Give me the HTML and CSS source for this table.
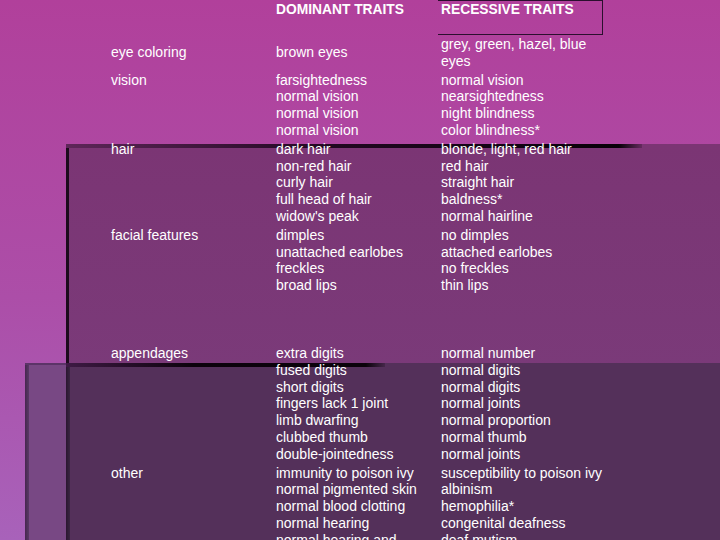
FILE: index.html
```html
<!DOCTYPE html>
<html>
<head>
<meta charset="utf-8">
<link rel="stylesheet" href="styles.css">
</head>
<body>
<div class="slide">
  <table class="traits">
    <colgroup><col class="col"><col class="col"><col class="col"></colgroup>
    <tr class="head">
      <td></td>
      <td>DOMINANT TRAITS</td>
      <td class="box">RECESSIVE TRAITS</td>
    </tr>
    <tr>
      <td class="mid">eye coloring</td>
      <td class="mid">brown eyes</td>
      <td>grey, green, hazel, blue<br>eyes</td>
    </tr>
    <tr>
      <td>vision</td>
      <td>farsightedness<br>normal vision<br>normal vision<br>normal vision</td>
      <td>normal vision<br>nearsightedness<br>night blindness<br>color blindness*</td>
    </tr>
    <tr>
      <td>hair</td>
      <td>dark hair<br>non-red hair<br>curly hair<br>full head of hair<br>widow's peak</td>
      <td>blonde, light, red hair<br>red hair<br>straight hair<br>baldness*<br>normal hairline</td>
    </tr>
    <tr class="tall">
      <td>facial features</td>
      <td>dimples<br>unattached earlobes<br>freckles<br>broad lips</td>
      <td>no dimples<br>attached earlobes<br>no freckles<br>thin lips</td>
    </tr>
    <tr>
      <td>appendages</td>
      <td>extra digits<br>fused digits<br>short digits<br>fingers lack 1 joint<br>limb dwarfing<br>clubbed thumb<br>double-jointedness</td>
      <td>normal number<br>normal digits<br>normal digits<br>normal joints<br>normal proportion<br>normal thumb<br>normal joints</td>
    </tr>
    <tr>
      <td>other</td>
      <td>immunity to poison ivy<br>normal pigmented skin<br>normal blood clotting<br>normal hearing<br>normal hearing and<br>speaking</td>
      <td>susceptibility to poison ivy<br>albinism<br>hemophilia*<br>congenital deafness<br>deaf mutism</td>
    </tr>
  </table>
</div>
</body>
</html>
```

FILE: styles.css
```css
html, body {
  margin: 0;
  padding: 0;
}

.slide {
  width: 720px;
  height: 540px;
  overflow: hidden;
  box-sizing: border-box;
  padding-left: 108px;
  background-repeat: no-repeat;
  background-image:
    linear-gradient(to right, #3e1a44, #0c020c 40%, #0a020a 94%, rgba(10, 2, 10, 0.2)),
    linear-gradient(#5c3468, #5c3468),
    linear-gradient(to right, #5e2659, #220822 45%, #080008 96%, rgba(8, 0, 8, 0.2)),
    linear-gradient(#1c0b1c, #1c0b1c),
    linear-gradient(to right, #2a1630, #3a2642),
    linear-gradient(to right, #46264f, #5a3a66),
    linear-gradient(#54305a, #54305a),
    linear-gradient(#784884, #784884),
    linear-gradient(#7b3574, #7a3e7d),
    linear-gradient(#b1409b, #ac4ea8 55%, #a862ba);
  background-position:
    66px 363px,
    25px 363px,
    66px 144px,
    66px 144px,
    66px 363px,
    25px 363px,
    66px 363px,
    25px 363px,
    66px 144px,
    0 0;
  background-size:
    319px 4px,
    41px 2px,
    576px 4px,
    3px 219px,
    4px 177px,
    4px 177px,
    654px 177px,
    41px 177px,
    654px 396px,
    720px 540px;
}

.traits {
  border-collapse: separate;
  border-spacing: 0;
  table-layout: fixed;
  width: 495px;
  font-family: "Liberation Sans", Arial, sans-serif;
  font-size: 14px;
  line-height: 16.8px;
  color: #ffffff;
}

.col {
  width: 165px;
}

.traits td {
  padding: 1px 0 1px 3px;
  vertical-align: top;
  white-space: nowrap;
  box-sizing: border-box;
}

.traits td.mid {
  vertical-align: middle;
}

.head td {
  font-weight: bold;
  font-size: 13.8px;
  padding-top: 2px;
  padding-bottom: 16.2px;
}

.head td.box {
  border-top: 1px solid #2b0f2e;
  border-right: 1px solid #2b0f2e;
  border-bottom: 1px solid #2b0f2e;
  padding-top: 1px;
  padding-bottom: 15.2px;
}

.tall td {
  padding-bottom: 50px;
}
```
